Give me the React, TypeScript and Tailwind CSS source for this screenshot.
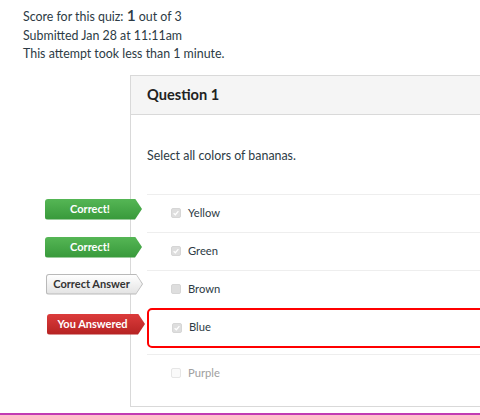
import React from "react";

type Badge = "correct" | "answer" | "wrong" | null;

const answers: { label: string; checked: boolean; badge: Badge }[] = [
  { label: "Yellow", checked: true, badge: "correct" },
  { label: "Green", checked: true, badge: "correct" },
  { label: "Brown", checked: false, badge: "answer" },
  { label: "Blue", checked: true, badge: "wrong" },
  { label: "Purple", checked: false, badge: null },
];

function Tag({ kind }: { kind: Badge }) {
  if (kind === "correct") {
    return (
      <div className="absolute left-[-102px] top-[4px] h-[21px] w-[97px] rounded-l-[3px] bg-gradient-to-b from-[#55b655] to-[#37993a] [clip-path:polygon(0_0,calc(100%-7px)_0,100%_50%,calc(100%-7px)_100%,0_100%)] pr-[7px] flex items-center justify-center text-[11px] font-bold text-white">
        Correct!
      </div>
    );
  }
  if (kind === "answer") {
    return (
      <div className="absolute left-[-101px] top-[3px] h-[21px] w-[97px] bg-[#b9b9b9] rounded-l-[3px] p-px [clip-path:polygon(0_0,calc(100%-7px)_0,100%_50%,calc(100%-7px)_100%,0_100%)]">
        <div className="h-full w-full rounded-l-[2px] bg-gradient-to-b from-[#ffffff] to-[#e3e3e3] [clip-path:polygon(0_0,calc(100%-6px)_0,100%_50%,calc(100%-6px)_100%,0_100%)] pr-[6px] flex items-center justify-center text-[11px] font-bold text-[#333]">
          Correct Answer
        </div>
      </div>
    );
  }
  if (kind === "wrong") {
    return (
      <div className="absolute left-[-100px] top-[6px] h-[21px] w-[98px] rounded-l-[3px] bg-gradient-to-b from-[#dc3b3b] to-[#b52222] [clip-path:polygon(0_0,calc(100%-7px)_0,100%_50%,calc(100%-7px)_100%,0_100%)] pr-[7px] flex items-center justify-center text-[11px] font-bold text-white">
        You Answered
      </div>
    );
  }
  return null;
}

function Box({ checked, faded }: { checked: boolean; faded?: boolean }) {
  return (
    <span
      className={
        "flex h-[10px] w-[10px] items-center justify-center rounded-[2px] border " +
        (faded ? "border-[#e6e6e6] bg-[#fafafa]" : "border-[#d6d6d6] bg-[#dedede]")
      }
    >
      {checked && (
        <svg viewBox="0 0 10 10" className="h-[8px] w-[8px]">
          <path d="M2 5.2 L4.2 7.2 L8 2.6" fill="none" stroke="#ffffff" strokeWidth="1.6" />
        </svg>
      )}
    </span>
  );
}

export default function App() {
  return (
    <div className="h-[415px] w-[480px] overflow-hidden bg-white font-['Lato','Open_Sans',sans-serif] text-[#2d3b45] relative">
      <div className="pl-[23px] pt-[8px] text-[12.4px] leading-[18.5px]">
        <div className="h-[18.5px]">
          Score for this quiz: <span className="text-[15.5px] font-semibold leading-[10px]">1</span> out of 3
        </div>
        <div>Submitted Jan 28 at 11:11am</div>
        <div>This attempt took less than 1 minute.</div>
      </div>

      <div className="ml-[130px] mt-[11px] w-[420px] border border-[#d9d9d9]">
        <div className="flex h-[39px] items-center border-b border-[#d9d9d9] bg-[#f5f5f5] pl-[16px] text-[14.6px] font-bold text-[#222]">
          Question 1
        </div>
        <div className="pl-[16px] pb-[14px]">
          <div className="pt-[31px] pb-[28px] text-[12.4px] leading-[20px]">Select all colors of bananas.</div>
          {answers.map((a) =>
            a.badge === "wrong" ? (
              <div key={a.label} className="relative">
                <Tag kind={a.badge} />
                <div className="flex h-[40px] items-center gap-[7px] rounded-[5px] border-2 border-[#ff0000] pl-[23px] text-[11.2px]">
                  <Box checked={a.checked} />
                  <span>{a.label}</span>
                </div>
                <div className="h-[6px]" />
              </div>
            ) : (
              <div key={a.label} className="relative border-t border-[#eeeeee]">
                <Tag kind={a.badge} />
                <div
                  className={
                    "flex h-[37px] items-center gap-[7px] pl-[24px] text-[11.2px] " +
                    (a.badge === null ? "text-[#a0a0a0]" : "")
                  }
                >
                  <Box checked={a.checked} faded={a.badge === null} />
                  <span>{a.label}</span>
                </div>
              </div>
            )
          )}
        </div>
      </div>
      <div className="mt-[6px] h-[3px] w-full bg-[#c13bb3]" />
    </div>
  );
}
